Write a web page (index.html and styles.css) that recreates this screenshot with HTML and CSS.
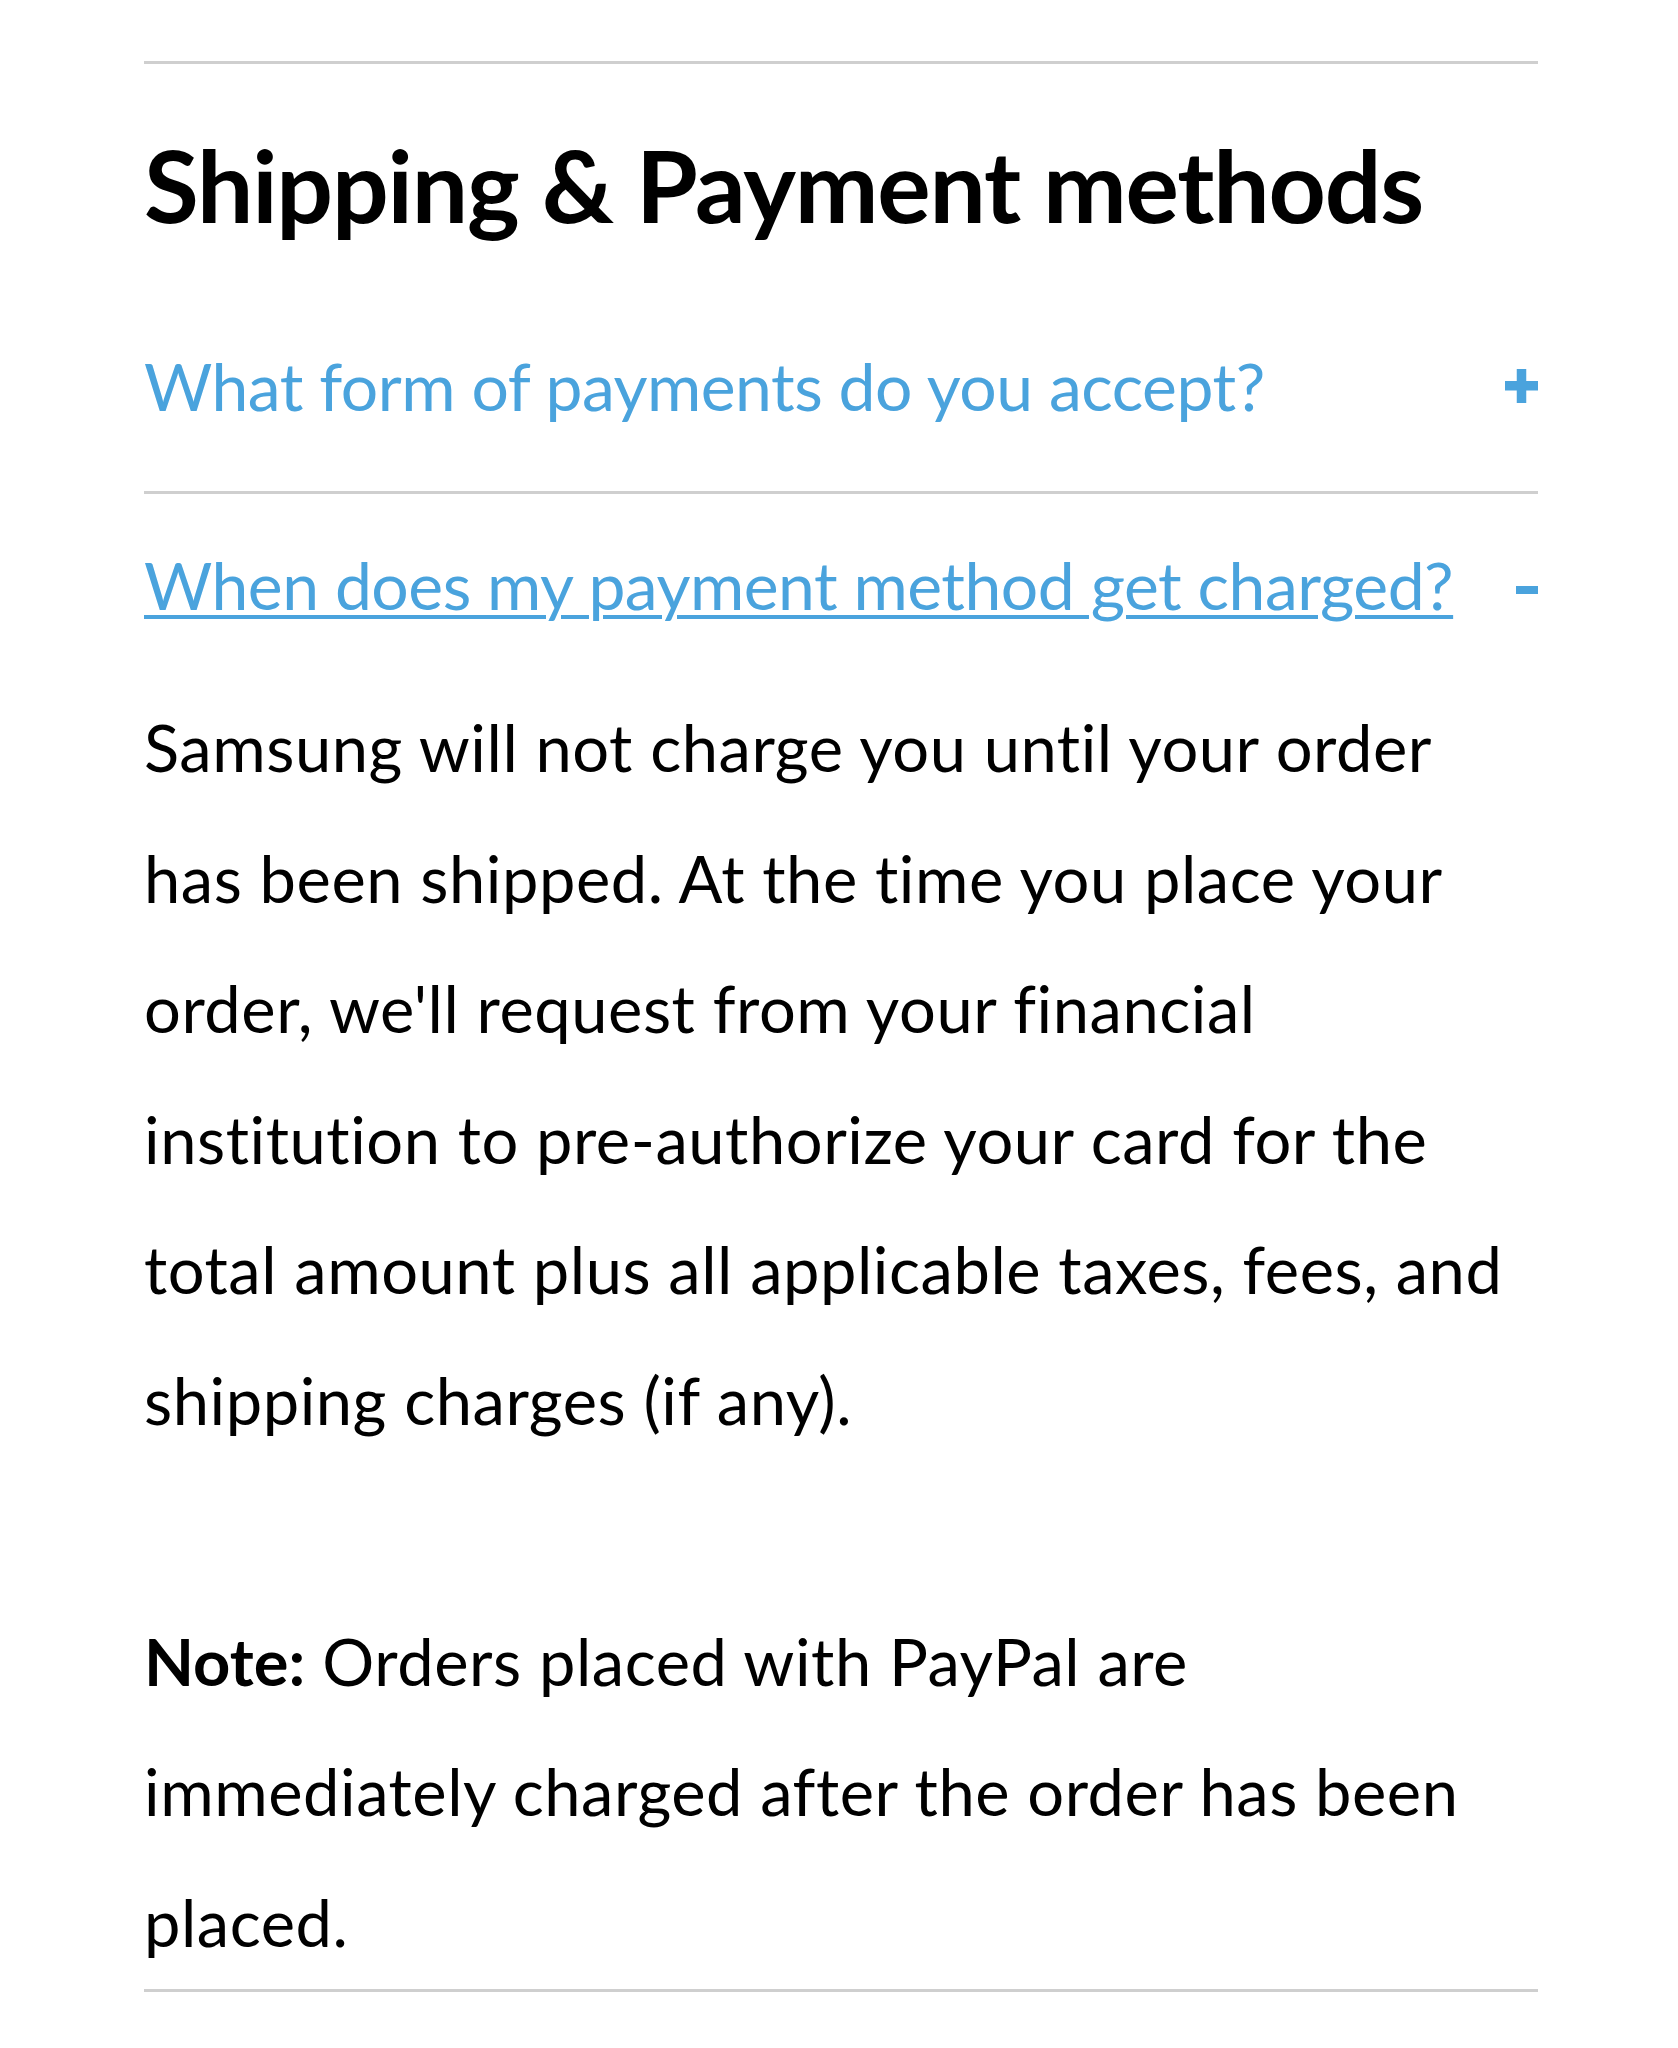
FILE: index.html
```html
<html>
<head>
<title>Shipping &amp; Payment methods</title>
<link rel="stylesheet" href="styles.css">
</head>

<!-- ====================================================== -->
<body>

<div class="faq">

<h2 class="faq-title">Shipping &amp; Payment methods</h2>

<!-- ======================= -->
<div class="faq-item">
    <a class="faq-q" href="#">
        <span class="faq-q-text">What form of payments do you accept?</span>
        <svg class="faq-icon" width="33" height="34" viewBox="0 0 33 34">
            <rect x="0" y="12" width="33" height="9.5" fill="#4aa3dd"/>
            <rect x="11.75" y="0" width="9.5" height="34" fill="#4aa3dd"/>
        </svg>
    </a>
</div>

<!-- ======================= -->
<div class="faq-item open">
    <a class="faq-q" href="#">
        <span class="faq-q-text">When does my payment method get charged?</span>
        <svg class="faq-icon" width="22" height="8" viewBox="0 0 22 8">
            <rect x="0" y="0" width="22" height="8" fill="#4aa3dd"/>
        </svg>
    </a>
    <p class="faq-a">Samsung will not charge you until your order has been shipped. At the time you place your order, we'll request from your financial institution to pre-authorize your card for the total amount plus all applicable taxes, fees, and shipping charges (if any).<br><br><b>Note:</b> Orders placed with PayPal are immediately charged after the order has been placed.</p>
</div>

</div>

</body>
</html>
```

FILE: styles.css
```css
/*-----------------------------------------------------------------*/
body {
    margin:             0;
    background:         #FFF;
    color:              #000;
    font-family:        Lato, "Open Sans", sans-serif;
}

/*-----------------------------------------------------------------*/
.faq {
    margin:             61px 140px 0 144px;
    border-top:         3px solid #CFCFCF;
}

/*-----------------------------------------------------------------*/
.faq-title {
    margin:             70px 0 61px 0;
    font-size:          100px;
    line-height:        100px;
    font-weight:        bold;
    letter-spacing:     -1.2px;
}

/*-----------------------------------------------------------------*/
.faq-item {
    border-bottom:      3px solid #CFCFCF;
}

.faq-q {
    display:            flex;
    align-items:        center;
    justify-content:    space-between;
    padding:            58px 0 72px 0;
    color:              #4AA3DD;
    text-decoration:    none;
    font-size:          66px;
    line-height:        66px;
    letter-spacing:     -0.5px;
}

.faq-item.open .faq-q {
    padding-bottom:     64px;
}

.faq-item.open .faq-q-text {
    text-decoration:            underline;
    text-decoration-thickness:  4px;
    text-underline-offset:      5px;
}

.faq-icon {
    flex:               none;
    display:            block;
}

.faq-item.open .faq-icon {
    margin-top:         10px;
}

/*-----------------------------------------------------------------*/
.faq-a {
    margin:             0 12px 2px 0;
    font-size:          65px;
    line-height:        130.5px;
    letter-spacing:     0.55px;
}

.faq-a b {
    font-weight:        bold;
    letter-spacing:     0;
}
```
